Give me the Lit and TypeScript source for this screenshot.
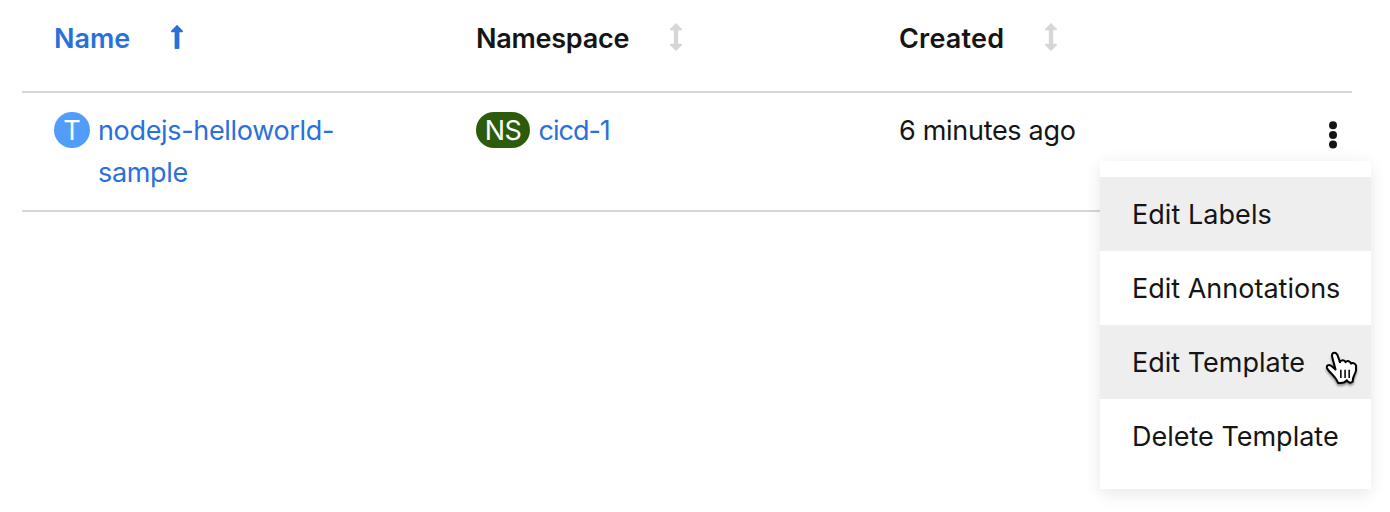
import { LitElement, html, css, svg } from "lit";
import { customElement } from "lit/decorators.js";

const sortUp = svg`<path d="M7 .8 13 7Q13.4 8.2 12 8.3H9.4V24Q9.4 25 8.4 25H5.6Q4.6 25 4.6 24V8.3H2Q.6 8.2 1 7Z"/>`;
const sortBoth = svg`<path d="M7 0 13 6Q13.4 7.2 12 7.3H9.2V20.7H12Q13.4 20.8 13 22L7 28 1 22Q.6 20.8 2 20.7H4.8V7.3H2Q.6 7.2 1 6Z"/>`;

@customElement("app-root")
export class AppRoot extends LitElement {
  static styles = css`
    :host {
      display: block;
      position: relative;
      height: 512px;
      overflow: hidden;
      background: #fff;
      color: #151515;
      font: 370 27px/42px Inter, "Liberation Sans", sans-serif;
      white-space: nowrap;
    }
    .table { margin: 0 38px 0 22px; }
    .row {
      display: grid;
      grid-template-columns: 422px 423px 1fr 38px;
      padding-left: 32px;
      box-sizing: border-box;
      border-bottom: 2px solid #d6d6d6;
    }
    .head { height: 93px; padding-top: 18px; font-weight: 600; }
    .body { height: 119px; padding-top: 17px; }
    .cell { display: flex; align-items: flex-start; }
    .sort { width: 14px; height: 28px; margin-top: 5px; fill: #d6d6d6; }
    .active { color: #2b70da; }
    .active .sort { fill: #2b70da; margin-top: 6px; }
    .hname { width: 116px; letter-spacing: 0; }
    .hns { width: 193px; letter-spacing: -0.25px; }
    .hcr { width: 145px; letter-spacing: 0.2px; }
    .badge {
      height: 36px;
      margin: 2px 8px 0 0;
      border-radius: 18px;
      line-height: 37px;
      text-align: center;
      color: #fff;
      flex: none;
    }
    .t { width: 36px; background: #519dfc; }
    .ns { width: 54px; background: #2d5b0c; letter-spacing: -0.5px; }
    .link { color: #2b70da; }
    .name { letter-spacing: -0.33px; }
    .proj { margin-left: 0.5px; letter-spacing: -1px; }
    .ago { letter-spacing: -0.3px; }
    .kebab { width: 8px; height: 28px; margin: 11px 0 0 15px; fill: #151515; }
    .menu {
      position: absolute;
      left: 1100px;
      top: 161px;
      width: 271px;
      box-sizing: border-box;
      padding: 16px 0;
      background: #fff;
      box-shadow: 0 8px 16px rgba(3, 3, 3, .05), 0 0 16px rgba(3, 3, 3, .05);
    }
    .item { height: 74px; line-height: 76px; padding-left: 32px; }
    .shaded { background: #eee; }
    .i0 { letter-spacing: 0.05px; }
    .i1, .i2, .i3 { letter-spacing: 0; }
    .pointer {
      position: absolute;
      left: 1324px;
      top: 350px;
      width: 37px;
      height: 40px;
      filter: drop-shadow(0 2px 1px rgba(0, 0, 0, .4));
    }
  `;

  private items = ["Edit Labels", "Edit Annotations", "Edit Template", "Delete Template"];

  render() {
    return html`
      <div class="table">
        <div class="row head">
          <div class="cell active"><span class="hname">Name</span><svg class="sort" viewBox="0 0 14 28">${sortUp}</svg></div>
          <div class="cell"><span class="hns">Namespace</span><svg class="sort" viewBox="0 0 14 28">${sortBoth}</svg></div>
          <div class="cell"><span class="hcr">Created</span><svg class="sort" viewBox="0 0 14 28">${sortBoth}</svg></div>
        </div>
        <div class="row body">
          <div class="cell"><span class="badge t">T</span><span class="link name">nodejs-helloworld-<br />sample</span></div>
          <div class="cell"><span class="badge ns">NS</span><span class="link proj">cicd-1</span></div>
          <div class="cell"><span class="ago">6 minutes ago</span></div>
          <div class="cell">
            <svg class="kebab" viewBox="0 0 8 28"><circle cx="4" cy="4.2" r="4" /><circle cx="4" cy="13.9" r="4" /><circle cx="4" cy="23.6" r="4" /></svg>
          </div>
        </div>
      </div>
      <div class="menu">
        ${this.items.map((text, i) => html`<div class="item i${i} ${i % 2 ? "" : "shaded"}"><span>${text}</span></div>`)}
      </div>
      <svg class="pointer" viewBox="0 0 36 40" preserveAspectRatio="none">
        <path d="M11.2 19.5 8.3 8.2C7.2 4.5 8 2.8 10 2.7C12 2.6 13 4.2 13.8 7L15.5 12.2C16.2 9.8 20.2 9.6 21 12.2C22.6 10.2 25.8 11 26.2 13.6C28 12.3 31 13.4 31.2 16C31.7 19.5 31 22.5 29.3 25.6C28.2 27.7 28 29.5 27.8 31.8C25.6 33.4 23.8 32.6 22.2 30.2C20.7 32.5 19 33.6 13.5 32.8C12.7 29.5 10.4 27.2 8.2 24.6C6 21.9 3.5 20.2 2.8 17.7C2.4 15.2 4.8 14.4 7 15.8Z" fill="#fff" stroke="#000" stroke-width="2" stroke-linejoin="round" />
        <path d="M16.4 19.8V28M20.5 19.8V28M24.5 19.8V28" stroke="#000" stroke-width="1.5" />
      </svg>
    `;
  }
}
